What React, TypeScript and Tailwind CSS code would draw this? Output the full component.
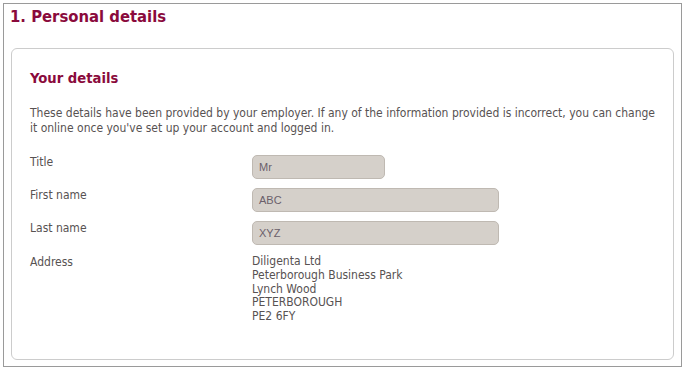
import React from "react";

const fields = [
    { label: "Title", value: "Mr", width: "w-[133px]" },
    { label: "First name", value: "ABC", width: "w-[247px]" },
    { label: "Last name", value: "XYZ", width: "w-[247px]" },
];

const address = [
    "Diligenta Ltd",
    "Peterborough Business Park",
    "Lynch Wood",
    "PETERBOROUGH",
    "PE2 6FY",
];

export default function App() {
    return (
        <div className="bg-white p-[3px] font-['DejaVu_Sans_Condensed','DejaVu_Sans',sans-serif] text-[#575252]">
            <section className="border border-[#9a9a9a] h-[364px] flex flex-col">
                <h1 className="pl-[6px] pt-[2px] text-[16.5px] leading-[22px] font-bold text-[#8a0a3c]">
                    1. Personal details
                </h1>

                <div className="mx-[7px] mt-[20px] mb-[6px] flex-1 border border-[#cccccc] rounded-[6px] pl-[18px] pr-4 pt-[19px]">
                    <h2 className="text-[14.7px] leading-[20px] font-bold text-[#8a0a3c]">Your details</h2>

                    <p className="mt-[18px] text-[12px] leading-[15px]">
                        These details have been provided by your employer. If any of the information provided is incorrect, you can change it online once you've set up your account and logged in.
                    </p>

                    <div className="mt-[18px] flex flex-col gap-[8px]">
                        {fields.map((f) => (
                            <div key={f.label} className="flex">
                                <div className="w-[222px] shrink-0 pt-[1px] text-[12px] leading-[15px]">{f.label}</div>
                                <div
                                    className={`${f.width} h-[24px] mt-[1px] rounded-[5px] border border-[#bfb9b2] bg-[#d5d0ca] px-[6px] text-[11px] leading-[22px] text-[#6b5f6b] font-['Liberation_Sans',sans-serif]`}
                                >
                                    {f.value}
                                </div>
                            </div>
                        ))}
                        <div className="flex mt-[1px] pt-[1px]">
                            <div className="w-[222px] shrink-0 text-[12px] leading-[15px]">Address</div>
                            <div className="text-[12px] leading-[13.8px]">
                                {address.map((line) => (
                                    <div key={line}>{line}</div>
                                ))}
                            </div>
                        </div>
                    </div>
                </div>
            </section>
        </div>
    );
}
